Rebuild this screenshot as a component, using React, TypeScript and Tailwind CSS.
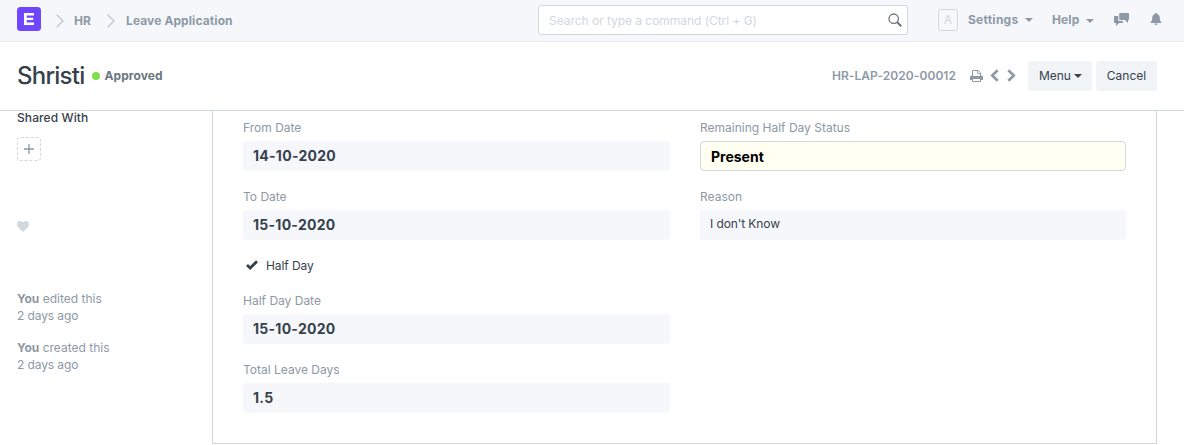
import React from "react";

const Caret = ({ className = "" }: { className?: string }) => (
  <svg className={className} width="8" height="4" viewBox="0 0 8 4" fill="currentColor">
    <path d="M0 0h8L4 4z" />
  </svg>
);

const Crumb = () => (
  <svg width="8" height="14" viewBox="0 0 8 14" fill="none" stroke="#c0cad4" strokeWidth="1.5">
    <path d="M.7.7 7 7 .7 13.3" />
  </svg>
);

const Angle = ({ flip = false }: { flip?: boolean }) => (
  <svg className={flip ? "rotate-180" : ""} width="9" height="13" viewBox="0 0 9 13" fill="none" stroke="currentColor" strokeWidth="2.6">
    <path d="M1.3 1.2 6.8 6.5 1.3 11.8" />
  </svg>
);

const Printer = () => (
  <svg width="13" height="12" viewBox="0 0 13 12">
    <path d="M2.5 6V.5h5.700L10.500 2.800V6" fill="none" stroke="currentColor" />
    <path d="M7.500.5v3h3" fill="none" stroke="currentColor" strokeWidth=".8" />
    <path d="M1.500 5.500H2V7h9V5.500h.5A1.500 1.500 0 0 1 13 7v3h-2V9H2v1H0V7a1.500 1.500 0 0 1 1.500-1.500zM2 6h9v3H2z" fill="currentColor" />
    <path d="M2.500 8.500h8v3h-8z" fill="#fff" stroke="currentColor" />
  </svg>
);

function Field({ label, value, kind = "bold" }: { label: string; value: string; kind?: "bold" | "plain" | "input" }) {
  return (
    <div className="flex h-[69px] flex-col">
      <div className="h-[22px] pt-px text-[12px] leading-4 text-[#8d99a6]">{label}</div>
      {kind === "input" ? (
        <div className="h-[30px] rounded-[4px] border border-[#d1d8dd] bg-[#fffff2] px-[10px] text-[14px] font-bold leading-[30px] text-black">{value}</div>
      ) : kind === "plain" ? (
        <div className="h-[30px] rounded-[3px] bg-[#f5f7fa] px-[10px] text-[12px] leading-[28px] tracking-[-0.1px] text-[#36414c]">{value}</div>
      ) : (
        <div className="h-[30px] rounded-[3px] bg-[#f5f7fa] px-[10px] text-[14px] font-bold leading-[30px] tracking-[0.27px] text-[#36414c]">{value}</div>
      )}
    </div>
  );
}

export default function App() {
  return (
    <div className="flex h-[445px] w-[1184px] flex-col overflow-hidden bg-white font-['Inter',sans-serif] text-[12px] leading-[17px] text-[#36414c]">
      <header className="flex h-[42px] shrink-0 items-center border-b border-[#e6eaee] bg-[#f5f7fa] pl-[17px] text-[12px] font-bold text-[#8d99a6]">
        <svg className="mb-[3px]" width="24" height="24" viewBox="0 0 24 24">
          <rect width="24" height="24" rx="3.500" fill="#7047ff" />
          <path d="M7 6h10v2.400H9.700v2.400h6.500v2.300H9.700v2.500H17V18H7z" fill="#fff" />
        </svg>
        <div className="ml-[15px] flex items-center"><Crumb /></div>
        <span className="ml-[10px] w-[33px] tracking-[0.1px]">HR</span>
        <Crumb />
        <span className="ml-[11px] w-[412px] tracking-[0.1px]">Leave Application</span>
        <div className="mb-px flex h-[30px] w-[370px] shrink-0 items-center justify-between rounded-[3px] border border-[#d1d8dd] bg-white pl-[10px] pr-[5px] font-normal text-[#d1d8dd]">
          <span className="tracking-[-0.04px]">Search or type a command (Ctrl + G)</span>
          <svg width="14" height="14" viewBox="0 0 14 14" fill="none" stroke="#6c7680">
            <circle cx="5.700" cy="5.700" r="4.700" strokeWidth="1.300" />
            <path d="m9.200 9.200 4 4" strokeWidth="2" />
          </svg>
        </div>
        <div className="mb-[2px] ml-[30px] flex h-[22px] w-[20px] items-center justify-center rounded-[3px] border border-[#d1d8dd] font-normal text-[#d1d8dd]">A</div>
        <span className="mb-[2px] ml-[10px] w-[57px] tracking-[0.25px]">Settings</span>
        <Caret className="mb-[2px]" />
        <span className="mb-[2px] ml-[19px] w-[34px] tracking-[0.1px]">Help</span>
        <Caret />
        <svg className="mb-[3px] ml-[20px]" width="15" height="13" viewBox="0 0 15 13" fill="currentColor">
          <path d="M6 0h8.200a.8.800 0 0 1 .8.800v5.400a.8.800 0 0 1-.8.800H14v3l-3-3H6a.8.800 0 0 1-.8-.8V.8A.8.800 0 0 1 6 0z" />
          <path d="M.8 3H4.200v4.200a.8.800 0 0 0 .8.800h4v1.200a.8.800 0 0 1-.8.800H5l-3 3v-3H.8a.8.800 0 0 1-.8-.8V3.800A.8.800 0 0 1 .8 3z" />
        </svg>
        <svg className="mb-[4px] ml-[21px]" width="12" height="12" viewBox="0 0 12 12" fill="currentColor">
          <path d="M6 0c.6 0 1 .4 1 1 1.900.5 2.800 2 2.800 3.900 0 2.300.5 3.400 1.700 4.300v.8H.5v-.8C1.700 8.300 2.200 7.200 2.200 4.900 2.200 3 3.100 1.500 5 1c0-.6.4-1 1-1zM4.500 10.500h3a1.500 1.500 0 0 1-3 0z" />
        </svg>
      </header>

      <section className="flex h-[69px] shrink-0 items-center border-b border-[#d1d8dd] pl-[17px] pr-[27px]">
        <h1 className="text-[24px] font-medium leading-[30px] tracking-[-0.75px]">Shristi</h1>
        <span className="ml-[8px] h-2 w-2 rounded-full bg-[#7fdf4a]" />
        <span className="mb-[2px] ml-[4px] font-bold tracking-[0.1px] text-[#6c7680]">Approved</span>
        <div className="ml-auto flex items-center text-[#8d99a6]">
          <span className="mb-[2px] mr-[14px] font-semibold tracking-[0.05px]">HR-LAP-2020-00012</span>
          <Printer />
          <span className="mb-px ml-[7px]"><Angle flip /></span>
          <span className="mb-px ml-[8px]"><Angle /></span>
        </div>
        <button className="ml-[12px] flex h-[30px] w-[64px] items-center rounded-[3px] bg-[#f0f4f7] pb-px pl-[11px] text-[12px] tracking-[-0.1px]">
          Menu<Caret className="ml-[3px]" />
        </button>
        <button className="ml-[4px] h-[30px] w-[61px] rounded-[3px] bg-[#f0f4f7] pb-[2px] text-[12px]">Cancel</button>
      </section>

      <main className="flex min-h-0 grow">
        <aside className="w-[212px] shrink-0 pl-[17px] text-[#8d99a6]">
          <div className="mt-[-2px] font-medium tracking-[0.1px] text-[#36414c]">Shared With</div>
          <div className="mt-[11px] flex h-[24px] w-[24px] items-center justify-center rounded-[4px] border border-dashed border-[#d1d8dd]">
            <svg width="10" height="10" viewBox="0 0 10 10" stroke="#8d99a6" strokeWidth="1.300"><path d="M5 0v10M0 5h10" /></svg>
          </div>
          <svg className="mt-[60px]" width="12" height="11" viewBox="0 0 12 11" fill="#d1d8dd">
            <path d="M6 11 1 6C-.6 4.400-.2 0 3 0c1.600 0 2.500.8 3 1.600C6.500.8 7.400 0 9 0c3.200 0 3.600 4.400 2 6z" />
          </svg>
          <div className="mt-[58px]"><b>You</b> edited this<br /><span className="tracking-[-0.1px]">2 days ago</span></div>
          <div className="mt-[15px]"><b>You</b> created this<br /><span className="tracking-[-0.1px]">2 days ago</span></div>
        </aside>
        <div className="flex h-[333px] w-[945px] gap-[30px] border-x border-b border-[#d1d8dd] px-[30px] pt-[8px]">
          <div className="w-[427px]">
            <Field label="From Date" value="14-10-2020" />
            <Field label="To Date" value="15-10-2020" />
            <div className="flex h-[35px] items-start pl-[3px]">
              <svg className="mt-[3px]" width="12" height="10" viewBox="0 0 12 10" fill="none" stroke="currentColor" strokeWidth="2.800"><path d="m1 5 3.200 3L11 1.300" /></svg>
              <span className="ml-[8px] tracking-[-0.1px]">Half Day</span>
            </div>
            <Field label="Half Day Date" value="15-10-2020" />
            <Field label="Total Leave Days" value="1.5" />
          </div>
          <div className="w-[426px]">
            <Field label="Remaining Half Day Status" value="Present" kind="input" />
            <Field label="Reason" value="I don't Know" kind="plain" />
          </div>
        </div>
      </main>
    </div>
  );
}
